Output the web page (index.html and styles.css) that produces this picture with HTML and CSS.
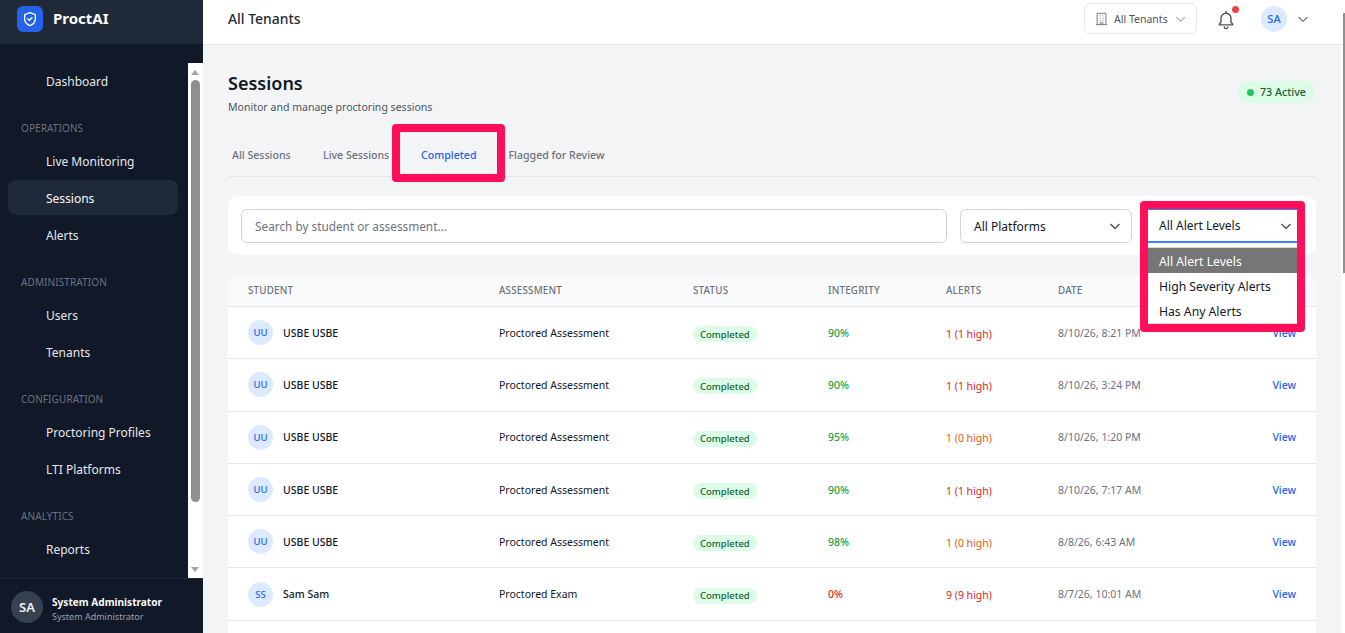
FILE: index.html
```html
<!DOCTYPE html>
<html lang="en">
<head>
<meta charset="utf-8">
<title>Sessions - ProctAI</title>
<link rel="stylesheet" href="styles.css">
</head>
<body>
<div class="app">
  <aside class="sidebar">
    <div class="brand">
      <span class="logo">
        <svg viewBox="0 0 24 24" width="16" height="16" fill="none" stroke="#fff" stroke-width="2" stroke-linecap="round" stroke-linejoin="round"><path d="M12 22s8-3.5 8-10V5.500L12 2.500 4 5.500V12c0 6.500 8 10 8 10z"/><path d="M9 12l2 2 4-4"/></svg>
      </span>
      <span class="brand-name">ProctAI</span>
    </div>
    <div class="nav-wrap">
      <nav class="nav">
        <a class="nav-item">Dashboard</a>
        <div class="nav-head">OPERATIONS</div>
        <a class="nav-item">Live Monitoring</a>
        <a class="nav-item active">Sessions</a>
        <a class="nav-item">Alerts</a>
        <div class="nav-head">ADMINISTRATION</div>
        <a class="nav-item">Users</a>
        <a class="nav-item">Tenants</a>
        <div class="nav-head">CONFIGURATION</div>
        <a class="nav-item">Proctoring Profiles</a>
        <a class="nav-item">LTI Platforms</a>
        <div class="nav-head">ANALYTICS</div>
        <a class="nav-item">Reports</a>
      </nav>
      <div class="sbar">
        <span class="sbar-up"></span>
        <span class="sbar-thumb"></span>
        <span class="sbar-down"></span>
      </div>
    </div>
    <div class="user">
      <span class="user-av">SA</span>
      <div class="user-text">
        <div class="user-name">System Administrator</div>
        <div class="user-role">System Administrator</div>
      </div>
    </div>
  </aside>
  <div class="main">
    <header class="topbar">
      <div class="top-title">All Tenants</div>
      <div class="top-right">
        <div class="tenant">
          <svg viewBox="0 0 24 24" width="16" height="16" fill="none" stroke="#6b7280" stroke-width="1.500"><path d="M5 21V3h14v18M3 21h18M9 7h1.500M13.500 7H15M9 11h1.500M13.500 11H15M9 15h1.500M13.500 15H15M10 21v-3h4v3"/></svg>
          <span>All Tenants</span>
          <svg class="tenant-chev" viewBox="0 0 12 12" width="12" height="12" fill="none" stroke="#9ca3af" stroke-width="1.100"><path d="M1.500 4l4.500 4.500L10.500 4"/></svg>
        </div>
        <div class="bell">
          <svg viewBox="0 0 24 24" width="20" height="20" fill="none" stroke="#4b5563" stroke-width="1.700" stroke-linecap="round" stroke-linejoin="round"><path d="M18 16V11a6 6 0 0 0-12 0v5l-2 2v1h16v-1z"/><path d="M10 21.500a2 2 0 0 0 4 0M12 3v2"/></svg>
          <span class="bell-dot"></span>
        </div>
        <div class="me">
          <span class="me-av">SA</span>
          <svg viewBox="0 0 12 12" width="12" height="12" fill="none" stroke="#6b7280" stroke-width="1.100"><path d="M1.500 4l4.500 4.500L10.500 4"/></svg>
        </div>
      </div>
    </header>
    <main class="content">
      <div class="page-head">
        <div>
          <h1>Sessions</h1>
          <p>Monitor and manage proctoring sessions</p>
        </div>
        <span class="active-pill"><i></i>73 Active</span>
      </div>
      <div class="tabs">
        <a class="tab t1">All Sessions</a>
        <a class="tab t2">Live Sessions</a>
        <a class="tab t3 current">Completed<span class="mark"></span></a>
        <a class="tab t4">Flagged for Review</a>
      </div>
      <div class="filters">
        <div class="input">Search by student or assessment...</div>
        <div class="select plat">All Platforms<svg viewBox="0 0 12 12" width="12" height="12" fill="none" stroke="#4b5563" stroke-width="1.500"><path d="M1.500 4l4.500 4.500L10.500 4"/></svg></div>
        <div class="select alert">All Alert Levels<svg viewBox="0 0 12 12" width="12" height="12" fill="none" stroke="#4b5563" stroke-width="1.500"><path d="M1.500 4l4.500 4.500L10.500 4"/></svg>
          <div class="menu">
            <div class="opt sel">All Alert Levels</div>
            <div class="opt">High Severity Alerts</div>
            <div class="opt">Has Any Alerts</div>
          </div>
          <span class="mark mark2"></span>
        </div>
      </div>
      <div class="table">
        <div class="tr th">
          <div>STUDENT</div><div>ASSESSMENT</div><div>STATUS</div><div>INTEGRITY</div><div>ALERTS</div><div>DATE</div><div></div>
        </div>
        <div class="tr">
          <div class="stu"><span class="av">UU</span>USBE USBE</div><div class="as">Proctored Assessment</div><div><span class="badge">Completed</span></div><div class="ok">90%</div><div class="al red">1 (1 high)</div><div class="dt">8/10/26, 8:21 PM</div><div class="vw">View</div>
        </div>
        <div class="tr">
          <div class="stu"><span class="av">UU</span>USBE USBE</div><div class="as">Proctored Assessment</div><div><span class="badge">Completed</span></div><div class="ok">90%</div><div class="al red">1 (1 high)</div><div class="dt">8/10/26, 3:24 PM</div><div class="vw">View</div>
        </div>
        <div class="tr">
          <div class="stu"><span class="av">UU</span>USBE USBE</div><div class="as">Proctored Assessment</div><div><span class="badge">Completed</span></div><div class="ok">95%</div><div class="al org">1 (0 high)</div><div class="dt">8/10/26, 1:20 PM</div><div class="vw">View</div>
        </div>
        <div class="tr">
          <div class="stu"><span class="av">UU</span>USBE USBE</div><div class="as">Proctored Assessment</div><div><span class="badge">Completed</span></div><div class="ok">90%</div><div class="al red">1 (1 high)</div><div class="dt">8/10/26, 7:17 AM</div><div class="vw">View</div>
        </div>
        <div class="tr">
          <div class="stu"><span class="av">UU</span>USBE USBE</div><div class="as">Proctored Assessment</div><div><span class="badge">Completed</span></div><div class="ok">98%</div><div class="al org">1 (0 high)</div><div class="dt">8/8/26, 6:43 AM</div><div class="vw">View</div>
        </div>
        <div class="tr">
          <div class="stu"><span class="av">SS</span>Sam Sam</div><div class="as">Proctored Exam</div><div><span class="badge">Completed</span></div><div class="bad">0%</div><div class="al red">9 (9 high)</div><div class="dt">8/7/26, 10:01 AM</div><div class="vw">View</div>
        </div>
        <div class="tr tail"></div>
      </div>
    </main>
  </div>
  <div class="page-sbar"><span class="page-thumb"></span></div>
</div>
</body>
</html>
```

FILE: styles.css
```css
* { box-sizing: border-box; }
html, body { margin: 0; height: 100%; overflow: hidden; }
body { font-family: "Noto Sans", "Liberation Sans", sans-serif; color: #111827; background: #f3f4f6; }

.app { display: flex; height: 633px; overflow: hidden; }

.sidebar { width: 203px; flex: none; background: #111827; display: flex; flex-direction: column; color: #e5e7eb; }
.brand { height: 44px; flex: none; background: #1f2937; display: flex; align-items: center; padding: 0 17px; gap: 10px; margin-bottom: 19px; overflow: hidden; }
.logo { width: 26px; height: 26px; margin-top: -7px; border-radius: 6px; background: #2563eb; display: flex; align-items: center; justify-content: center; }
.brand-name { font-size: 15px; font-weight: 700; color: #fff; margin-top: -8px; }

.nav-wrap { flex: 1; min-height: 0; display: flex; }
.nav { flex: 1; padding: 0 10px 0 8px; overflow: hidden; }
.nav-item { display: flex; align-items: center; height: 35px; padding: 2px 0 0 38px; border-radius: 8px; font-size: 12px; color: #e5e7eb; margin-bottom: 2px; }
.nav-item.active { background: #1f2937; color: #f9fafb; }
.nav-head { font-size: 10px; line-height: 14px; color: #6b7280; padding-left: 13px; letter-spacing: 0.1px; margin: 23.200px 0 7.700px; }

.sbar { width: 15px; flex: none; background: #fff; display: flex; flex-direction: column; align-items: center; padding: 0 2px 0 1px; }
.sbar-up, .sbar-down { width: 0; height: 0; flex: none; border-left: 4px solid transparent; border-right: 4px solid transparent; margin: 7px 0 5px; }
.sbar-up { border-bottom: 5px solid #a3a3a3; }
.sbar-down { border-top: 5px solid #a3a3a3; margin: auto 0 6px; }
.sbar-thumb { width: 9px; height: 422px; background: #8f8f8f; border-radius: 5px; }

.user { height: 55px; flex: none; display: flex; align-items: center; gap: 9px; padding: 0 11px; border-top: 1px solid #1f2937; }
.user-av { width: 32px; height: 32px; border-radius: 50%; background: #374151; color: #f3f4f6; font-size: 13px; font-weight: 600; display: flex; align-items: center; justify-content: center; flex: none; margin-top: 2px; }
.user-text { padding-top: 6px; }
.user-name { font-size: 10.100px; font-weight: 700; line-height: 15px; color: #f9fafb; white-space: nowrap; }
.user-role { font-size: 9px; line-height: 14px; color: #9ca3af; white-space: nowrap; }

.main { flex: 1; min-width: 0; display: flex; flex-direction: column; }

.topbar { height: 45px; flex: none; background: #fff; border-bottom: 1px solid #e5e7eb; display: flex; align-items: center; justify-content: space-between; padding: 0 32px 7px 25px; }
.top-title { font-size: 13.900px; font-weight: 500; color: #1f2937; }
.top-right { display: flex; align-items: center; }
.tenant { width: 113px; height: 31px; border: 1px solid #e5e7eb; border-radius: 6px; display: flex; align-items: center; gap: 5px; padding: 0 10px 0 9px; font-size: 10.500px; color: #4b5563; white-space: nowrap; }
.tenant-chev { margin-left: 2px; }
.bell { position: relative; width: 20px; height: 20px; margin-left: 19px; }
.bell-dot { position: absolute; top: -3px; right: -3px; width: 7px; height: 7px; border-radius: 50%; background: #ef4444; }
.me { display: flex; align-items: center; gap: 10px; margin-left: 25px; }
.me-av { width: 26px; height: 26px; border-radius: 50%; background: #dbeafe; color: #2563eb; font-size: 11px; font-weight: 500; display: flex; align-items: center; justify-content: center; }

.content { flex: 1; min-height: 0; padding: 26px 25px 0 25px; overflow: hidden; }

.page-head { display: flex; justify-content: space-between; align-items: flex-start; }
h1 { margin: 0; font-size: 18px; line-height: 24px; font-weight: 600; color: #111827; }
.page-head p { margin: 5px 0 0; font-size: 10.550px; line-height: 15px; color: #4b5563; }
.active-pill { display: inline-flex; align-items: center; gap: 6px; margin: 10px 1px 0 0; height: 22px; padding: 0 9px; border-radius: 11px; background: #dcfce7; color: #166534; font-size: 10.700px; font-weight: 500; }
.active-pill i { width: 7px; height: 7px; border-radius: 50%; background: #22c55e; }

.tabs { display: flex; height: 42px; margin-top: 20px; border-bottom: 1px solid #e5e7eb; }
.tab { position: relative; font-size: 10.600px; font-weight: 500; line-height: 14px; padding-top: 13px; color: #6b7280; white-space: nowrap; }
.t1 { margin-left: 4px; width: 91px; }
.t2 { width: 98px; }
.t3 { width: 87.500px; color: #2563eb; }
.mark { position: absolute; left: -29px; top: -11px; width: 113px; height: 58px; border: 8px solid #ff0f5a; border-radius: 4px; }

.filters { display: flex; gap: 13px; height: 59px; margin-top: 19px; padding: 13px 13px; background: #fff; border-radius: 10px; }
.input { flex: 1; height: 34px; border: 1px solid #d1d5db; border-radius: 6px; padding: 0 13px; font-size: 11.800px; line-height: 32px; color: #6b7280; }
.select { position: relative; flex: none; height: 34px; display: flex; align-items: center; justify-content: space-between; font-size: 12px; white-space: nowrap; color: #111827; }
.select.plat { width: 172px; border: 1px solid #d1d5db; border-radius: 6px; padding: 0 10px 0 13px; }
.select.alert { width: 149px; margin: 0 6px 0 3px; padding: 0 5.500px 0 11px; border-top: 1px solid #3b82f6; border-bottom: 2px solid #3b82f6; background: #fff; }
.menu { position: absolute; left: 0; right: 0; top: 37px; background: #fff; border-top: 1px solid #d4d4d4; border-bottom: 1px solid #d4d4d4; z-index: 3; }
.opt { height: 25px; line-height: 27px; padding-left: 11px; font-size: 12.200px; color: #111827; }
.opt.sel { background: #767676; color: #fff; }
.mark2 { left: -8px; top: -9px; width: 165px; height: 131px; z-index: 4; }

.table { margin-top: 20px; background: #fff; border-radius: 10px 10px 0 0; }
.tr { display: grid; grid-template-columns: 251px 194px 135px 118px 112px 1fr 58px; align-items: center; height: 52.300px; padding: 0 20px; border-bottom: 1px solid #e5e7eb; font-size: 10.500px; }
.th { height: 32px; background: #f9fafb; color: #6b7280; font-size: 9.800px; font-weight: 500; letter-spacing: 0.2px; border-radius: 10px 10px 0 0; }
.tail { border-bottom: 0; }
.stu { display: flex; align-items: center; gap: 10px; font-weight: 500; color: #111827; }
.av { width: 25px; height: 25px; border-radius: 50%; background: #dbeafe; color: #2563eb; font-size: 9.500px; font-weight: 500; display: flex; align-items: center; justify-content: center; }
.as { color: #111827; }
.badge { display: inline-flex; align-items: center; height: 16px; padding: 0 7px; margin-top: 3px; border-radius: 8px; background: #dcfce7; color: #166534; font-size: 9.500px; font-weight: 500; }
.ok { color: #16a34a; font-weight: 500; }
.bad { color: #dc2626; font-weight: 500; }
.al { padding-top: 2px; }
.red { color: #dc2626; }
.org { color: #ea580c; }
.dt { color: #6b7280; }
.vw { color: #2563eb; font-weight: 500; text-align: right; }

.page-sbar { width: 4px; flex: none; background: #fff; padding: 13px 0 0 2px; }
.page-thumb { display: block; width: 2px; height: 260px; background: #8f8f8f; }
```
